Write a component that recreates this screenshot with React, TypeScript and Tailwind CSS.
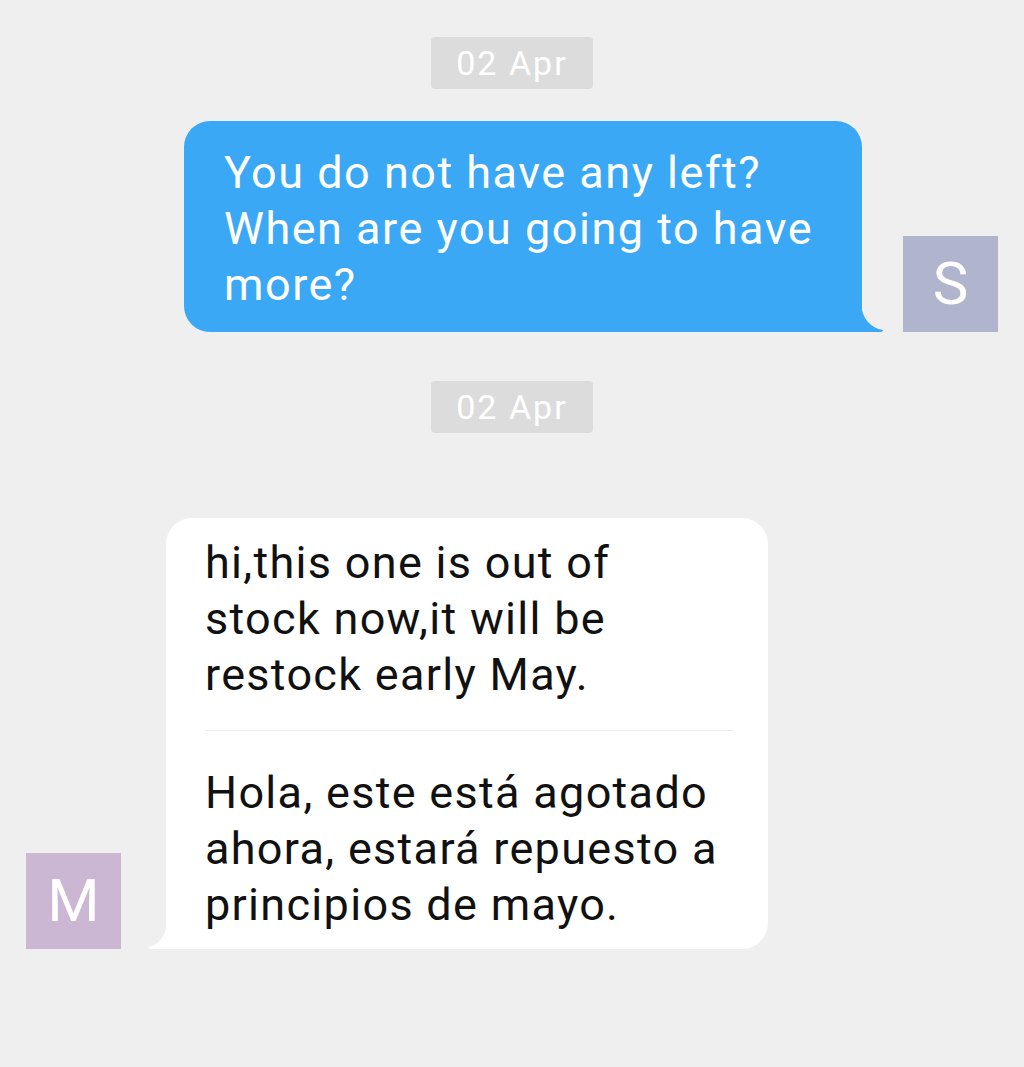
import React from "react";

function DateChip() {
  return (
    <div className="flex justify-center">
      <div className="h-[52px] px-[25px] rounded-[4px] bg-[#dcdcdc] text-white text-[34px] leading-[52px] tracking-[2px]">
        02 Apr
      </div>
    </div>
  );
}

export default function App() {
  return (
    <div className="w-[1024px] min-h-[1067px] bg-[#efefef] pt-[37px] font-['Roboto','Noto_Sans',sans-serif]">
      <DateChip />

      <div className="mt-[32px] flex items-end justify-end pr-[26px]">
        <div className="relative">
          <div className="w-[678px] rounded-t-[26px] rounded-bl-[26px] bg-[#3aa8f4] pl-[40px] pr-[10px] pt-[24px] pb-[19px] text-white text-[45px] leading-[56px] tracking-[1.5px]">
            You do not have any left?
            <br />
            When are you going to have
            <br />
            more?
          </div>
          <svg
            className="absolute bottom-0 right-[-22px]"
            width="23"
            height="28"
            viewBox="0 0 23 28"
          >
            <path d="M0 0 C1 14 9 24 22 26 C22 27 21 28 20 28 L0 28 Z" fill="#3aa8f4" />
          </svg>
        </div>
        <div className="ml-[41px] flex h-[96px] w-[95px] items-center justify-center bg-[#b1b4cd] text-white text-[60px] leading-none">
          S
        </div>
      </div>

      <div className="mt-[49px]">
        <DateChip />
      </div>

      <div className="mt-[85px] flex items-end pl-[26px]">
        <div className="flex h-[96px] w-[95px] items-center justify-center bg-[#cbb6d3] text-white text-[60px] leading-none">
          M
        </div>
        <div className="relative ml-[45px]">
          <svg
            className="absolute bottom-0 left-[-18px]"
            width="19"
            height="26"
            viewBox="0 0 19 26"
          >
            <path d="M19 0 C18 12 11 22 1 24 C0 25 1 26 2 26 L19 26 Z" fill="#ffffff" />
          </svg>
          <div className="w-[602px] rounded-t-[26px] rounded-br-[26px] bg-white pl-[39px] pr-[20px] pt-[17px] pb-[16px] text-[#111111] text-[45px] leading-[56px] tracking-[1.3px]">
            <div>
              hi,this one is out of
              <br />
              stock now,it will be
              <br />
              restock early May.
            </div>
            <div className="mt-[27px] mb-[34px] mr-[15px] h-px bg-[#eeeeee]" />
            <div>
              Hola, este está agotado
              <br />
              ahora, estará repuesto a
              <br />
              principios de mayo.
            </div>
          </div>
        </div>
      </div>
    </div>
  );
}
